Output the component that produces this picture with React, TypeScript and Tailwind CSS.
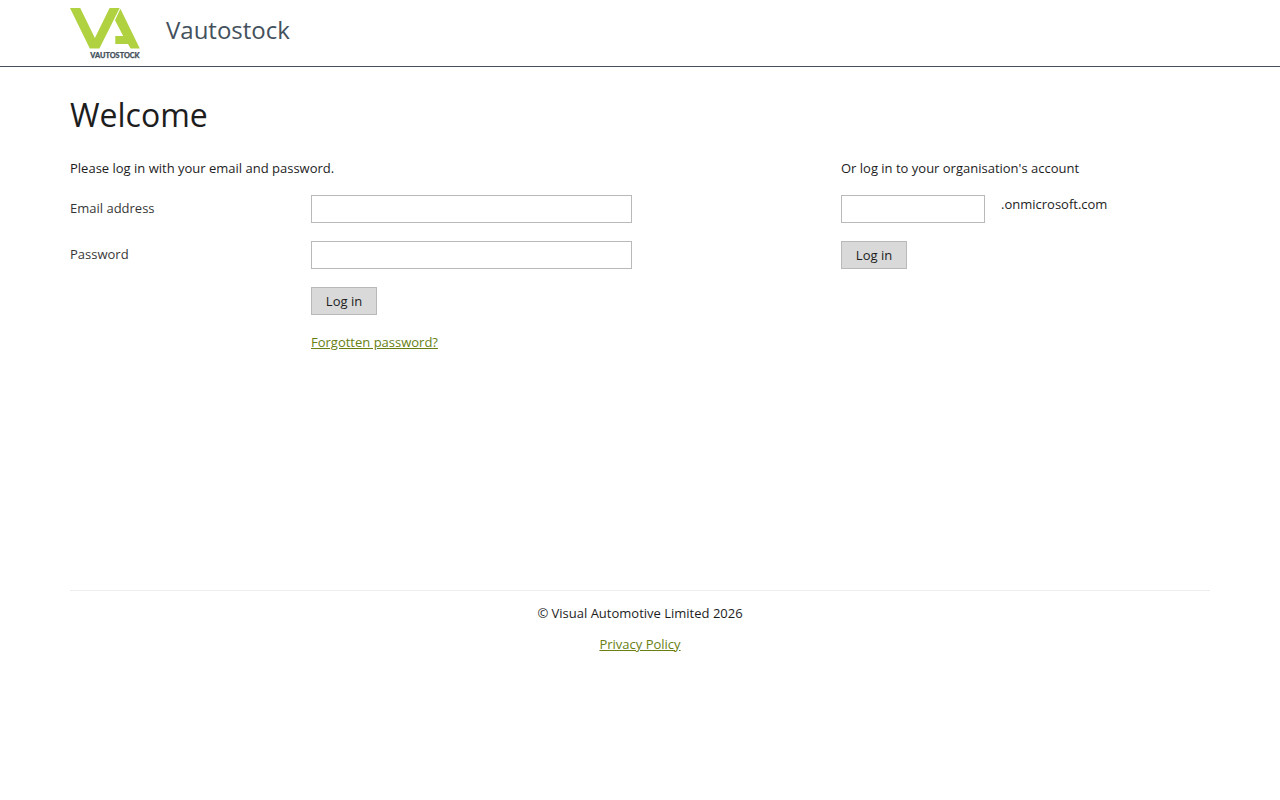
import React from 'react';

const Logo: React.FC = () => (
  <svg
    width="70"
    height="50"
    viewBox="0 0 70 50"
    role="img"
    aria-label="Vautostock"
    className="block overflow-visible"
  >
    <path fill="#b0d240" d="M0 0H10.2L24.9 30L39.6 0H49.7L29.4 40.6H19.8Z" />
    <path fill="#b0d240" d="M50.4 0.8L45 12.2L53.2 28H45.3V36H58L60.6 40.6H69.8Z" />
    <text
      x="20.3"
      y="49.6"
      textLength="49.4"
      lengthAdjust="spacingAndGlyphs"
      fill="#44515c"
      stroke="#44515c"
      strokeWidth="0.25"
      fontFamily="Lato, sans-serif"
      fontWeight="900"
      fontSize="7"
    >
      VAUTOSTOCK
    </text>
  </svg>
);

interface TextFieldProps {
  id: string;
  type?: string;
  className?: string;
}

const TextField: React.FC<TextFieldProps> = ({ id, type = 'text', className = '' }) => (
  <input
    id={id}
    type={type}
    className={`block h-7 border border-[#b9b9b9] bg-white px-2 outline-none ${className}`}
  />
);

const LoginButton: React.FC = () => (
  <button
    type="submit"
    className="block h-7 w-[66px] border border-[#b9b9b9] bg-[#d9d9d9] text-center leading-[26px]"
  >
    Log in
  </button>
);

const App: React.FC = () => {
  return (
    <div className="min-h-screen bg-white font-['Open_Sans',sans-serif] text-[13px] leading-5 text-[#1d1d1d]">
      <header className="h-[67px] border-b border-[#44515c]">
        <div className="mx-auto flex w-[1140px] pt-2">
          <Logo />
          <span className="ml-[26px] text-2xl leading-[44px] text-[#44515c]">Vautostock</span>
        </div>
      </header>

      <main className="mx-auto h-[523px] w-[1140px] pt-6">
        <h1 className="text-[32px] leading-[48px]">Welcome</h1>
        <div className="mt-[19px] flex">
          <form className="w-[771px]" onSubmit={(e) => e.preventDefault()}>
            <p>Please log in with your email and password.</p>
            <div className="mt-[17px] flex">
              <label htmlFor="email" className="w-[241px] pt-[3px] opacity-90">
                Email address
              </label>
              <TextField id="email" type="email" className="w-[321px]" />
            </div>
            <div className="mt-[18px] flex">
              <label htmlFor="password" className="w-[241px] pt-[3px] opacity-90">
                Password
              </label>
              <TextField id="password" type="password" className="w-[321px]" />
            </div>
            <div className="mt-[18px] pl-[241px]">
              <LoginButton />
              <a href="#" className="mt-[17px] inline-block text-[#688013] underline">
                Forgotten password?
              </a>
            </div>
          </form>

          <form onSubmit={(e) => e.preventDefault()}>
            <p>Or log in to your organisation's account</p>
            <div className="mt-[17px] mb-[18px] flex">
              <TextField id="organisation" className="w-36" />
              <span className="ml-4 leading-[18px]">.onmicrosoft.com</span>
            </div>
            <LoginButton />
          </form>
        </div>
      </main>

      <footer className="mx-auto w-[1140px] border-t border-[#eeeeee] pt-3 text-center">
        <p>© Visual Automotive Limited 2026</p>
        <a href="#" className="mt-[11px] inline-block text-[#688013] underline">
          Privacy Policy
        </a>
      </footer>
    </div>
  );
};

export default App;
